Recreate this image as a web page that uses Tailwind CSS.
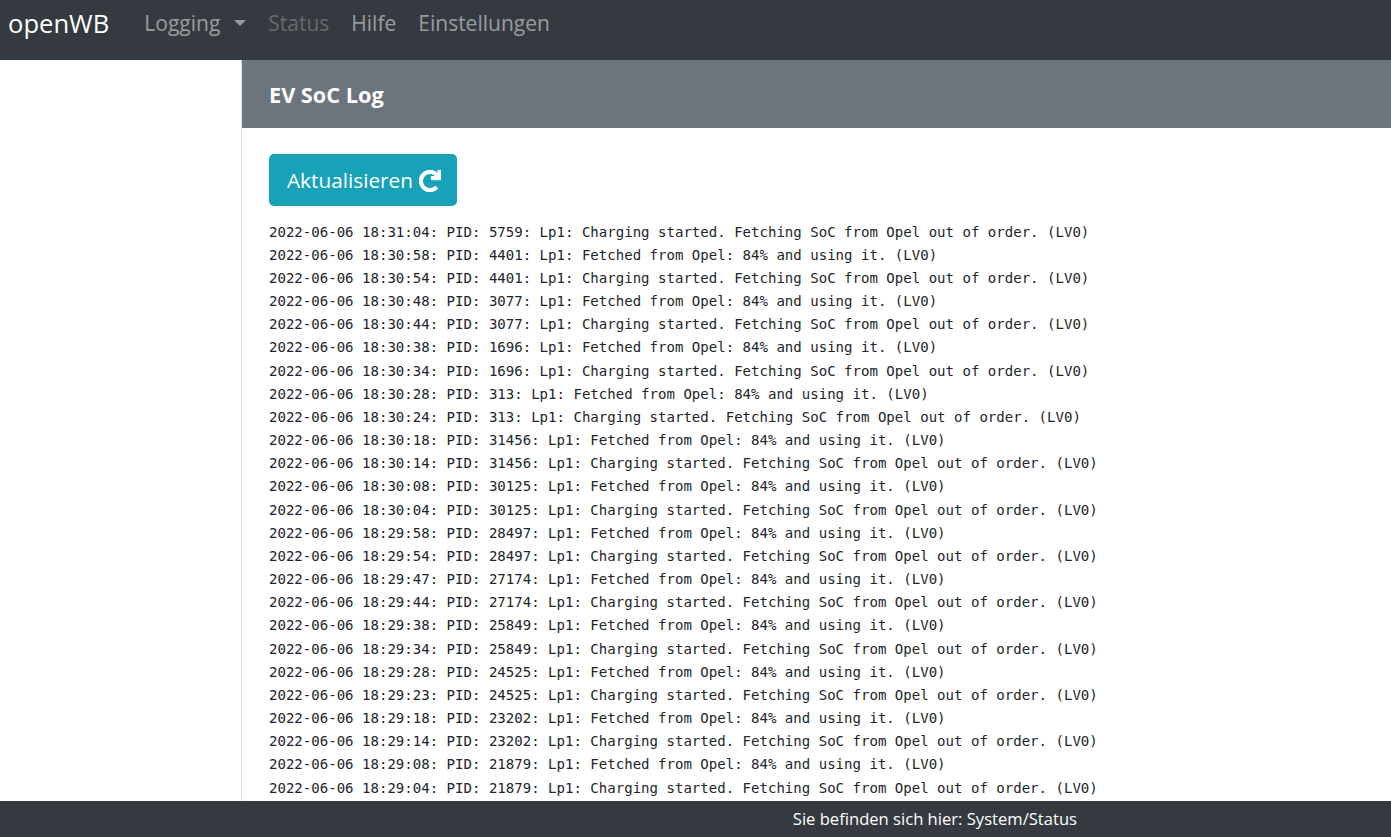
<!DOCTYPE html>
<html lang="en">
<head>
<meta charset="UTF-8" />
<title>openWB</title>
<script src="https://cdn.jsdelivr.net/npm/@tailwindcss/browser@4"></script>
</head>
<body class="h-screen overflow-hidden flex flex-col bg-white font-['Open_Sans',sans-serif]">
	<!-- Navbar -->
	<nav class="h-[60px] shrink-0 bg-[#343a40] flex items-center pl-2 pb-3 text-[21px]">
		<a class="text-white text-[25.6px] mr-[35px]">openWB</a>
		<ul class="flex items-center gap-[22px]">
			<li class="flex items-center text-white/50">Logging<span class="ml-[14px] mb-[2px] w-0 h-0 border-x-[6.5px] border-x-transparent border-t-[6px] border-t-white/50"></span></li>
			<li class="text-white/25">Status</li>
			<li class="text-white/50">Hilfe</li>
			<li class="text-white/50">Einstellungen</li>
		</ul>
	</nav>

	<div class="flex-1 min-h-0 flex">
		<aside class="w-[241px] shrink-0"></aside>
		<main class="flex-1 min-w-0 border-l border-[#dee2e6] overflow-hidden">
			<div class="h-[68px] bg-[#6c757d] flex items-center pl-[27px] pt-[3px]">
				<h1 class="text-white text-[21.7px] font-bold">EV SoC Log</h1>
			</div>
			<div class="pl-[27px] pt-[26px]">
				<button class="h-[52px] w-[188px] pl-[2px] pt-[1px] rounded-[5px] bg-[#17a2b8] text-white text-[20.8px] flex items-center justify-center gap-[6px]">
					Aktualisieren
					<svg class="w-[22px] h-[22px]" viewBox="0 0 512 512" fill="currentColor" stroke="currentColor" stroke-width="24"><path d="M500.33 0h-47.41a12 12 0 0 0-12 12.57l4 82.76A247.42 247.42 0 0 0 256 8C119.34 8 8.05 119.53 8 256.19 7.95 393.07 119 504 256 504a247.1 247.1 0 0 0 166.18-63.91 12 12 0 0 0 .48-17.43l-34-34a12 12 0 0 0-16.38-.55A176 176 0 1 1 402.1 157.8l-101.53-4.87a12 12 0 0 0-12.57 12v47.41a12 12 0 0 0 12 12h200.33a12 12 0 0 0 12-12V12a12 12 0 0 0-12-12z"/></svg>
				</button>
				<div class="mt-[14.5px] whitespace-nowrap font-['DejaVu_Sans_Mono',monospace] text-[14.05px] leading-[23.17px] text-[#212529]">
					<div>2022-06-06 18:31:04: PID: 5759: Lp1: Charging started. Fetching SoC from Opel out of order. (LV0)</div>
					<div>2022-06-06 18:30:58: PID: 4401: Lp1: Fetched from Opel: 84% and using it. (LV0)</div>
					<div>2022-06-06 18:30:54: PID: 4401: Lp1: Charging started. Fetching SoC from Opel out of order. (LV0)</div>
					<div>2022-06-06 18:30:48: PID: 3077: Lp1: Fetched from Opel: 84% and using it. (LV0)</div>
					<div>2022-06-06 18:30:44: PID: 3077: Lp1: Charging started. Fetching SoC from Opel out of order. (LV0)</div>
					<div>2022-06-06 18:30:38: PID: 1696: Lp1: Fetched from Opel: 84% and using it. (LV0)</div>
					<div>2022-06-06 18:30:34: PID: 1696: Lp1: Charging started. Fetching SoC from Opel out of order. (LV0)</div>
					<div>2022-06-06 18:30:28: PID: 313: Lp1: Fetched from Opel: 84% and using it. (LV0)</div>
					<div>2022-06-06 18:30:24: PID: 313: Lp1: Charging started. Fetching SoC from Opel out of order. (LV0)</div>
					<div>2022-06-06 18:30:18: PID: 31456: Lp1: Fetched from Opel: 84% and using it. (LV0)</div>
					<div>2022-06-06 18:30:14: PID: 31456: Lp1: Charging started. Fetching SoC from Opel out of order. (LV0)</div>
					<div>2022-06-06 18:30:08: PID: 30125: Lp1: Fetched from Opel: 84% and using it. (LV0)</div>
					<div>2022-06-06 18:30:04: PID: 30125: Lp1: Charging started. Fetching SoC from Opel out of order. (LV0)</div>
					<div>2022-06-06 18:29:58: PID: 28497: Lp1: Fetched from Opel: 84% and using it. (LV0)</div>
					<div>2022-06-06 18:29:54: PID: 28497: Lp1: Charging started. Fetching SoC from Opel out of order. (LV0)</div>
					<div>2022-06-06 18:29:47: PID: 27174: Lp1: Fetched from Opel: 84% and using it. (LV0)</div>
					<div>2022-06-06 18:29:44: PID: 27174: Lp1: Charging started. Fetching SoC from Opel out of order. (LV0)</div>
					<div>2022-06-06 18:29:38: PID: 25849: Lp1: Fetched from Opel: 84% and using it. (LV0)</div>
					<div>2022-06-06 18:29:34: PID: 25849: Lp1: Charging started. Fetching SoC from Opel out of order. (LV0)</div>
					<div>2022-06-06 18:29:28: PID: 24525: Lp1: Fetched from Opel: 84% and using it. (LV0)</div>
					<div>2022-06-06 18:29:23: PID: 24525: Lp1: Charging started. Fetching SoC from Opel out of order. (LV0)</div>
					<div>2022-06-06 18:29:18: PID: 23202: Lp1: Fetched from Opel: 84% and using it. (LV0)</div>
					<div>2022-06-06 18:29:14: PID: 23202: Lp1: Charging started. Fetching SoC from Opel out of order. (LV0)</div>
					<div>2022-06-06 18:29:08: PID: 21879: Lp1: Fetched from Opel: 84% and using it. (LV0)</div>
					<div>2022-06-06 18:29:04: PID: 21879: Lp1: Charging started. Fetching SoC from Opel out of order. (LV0)</div>
				</div>
			</div>
		</main>
	</div>

	<!-- Footer -->
	<footer class="h-[36px] shrink-0 bg-[#343a40] text-white text-[16.6px] flex items-center justify-end pr-[314px]">
		Sie befinden sich hier: System/Status
	</footer>
</body>
</html>
